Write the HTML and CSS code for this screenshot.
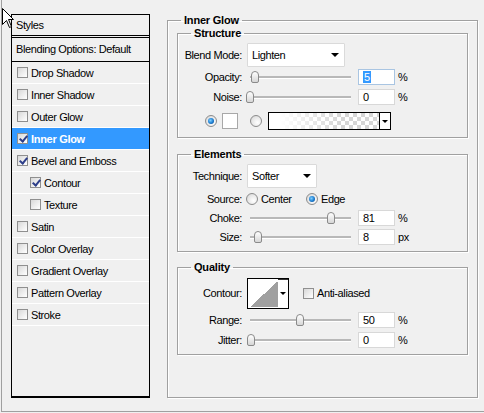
FILE: index.html
```html
<!DOCTYPE html>
<html>
<head>
<meta charset="utf-8">
<title>Layer Style - Inner Glow</title>
<link rel="stylesheet" href="styles.css">
</head>
<body>
<div class="screen">
  <div class="frame">
    <div class="styles-panel">
      <div class="sp-head">Styles</div>
      <div class="sp-blend">Blending Options: Default</div>
      <ul class="sp-list">
        <li class="sp-item"><span class="cb"></span>Drop Shadow</li>
        <li class="sp-item"><span class="cb"></span>Inner Shadow</li>
        <li class="sp-item"><span class="cb"></span>Outer Glow</li>
        <li class="sp-item active"><span class="cb checked"></span>Inner Glow</li>
        <li class="sp-item"><span class="cb checked"></span>Bevel and Emboss</li>
        <li class="sp-item sub"><span class="cb checked"></span>Contour</li>
        <li class="sp-item sub"><span class="cb"></span>Texture</li>
        <li class="sp-item"><span class="cb"></span>Satin</li>
        <li class="sp-item"><span class="cb"></span>Color Overlay</li>
        <li class="sp-item"><span class="cb"></span>Gradient Overlay</li>
        <li class="sp-item"><span class="cb"></span>Pattern Overlay</li>
        <li class="sp-item"><span class="cb"></span>Stroke</li>
      </ul>
    </div>

    <fieldset class="group outer">
      <legend class="outer-legend">Inner Glow</legend>

      <fieldset class="group sub-group structure">
        <legend>Structure</legend>
        <div class="row row-blend">
          <span class="lbl">Blend Mode:</span>
          <div class="select select-blend"><span>Lighten</span><span class="arrow"></span></div>
        </div>
        <div class="row row-opacity">
          <span class="lbl">Opacity:</span>
          <div class="slider"><span class="thumb" style="left:1px"></span></div>
          <div class="num focused"><span class="sel">5</span></div>
          <span class="unit">%</span>
        </div>
        <div class="row row-noise">
          <span class="lbl">Noise:</span>
          <div class="slider"><span class="thumb" style="left:-4px"></span></div>
          <div class="num">0</div>
          <span class="unit">%</span>
        </div>
        <div class="row row-color">
          <span class="radio on first"></span>
          <span class="swatch"></span>
          <span class="radio second"></span>
          <div class="gradient"><span class="grad-fill"></span><span class="grad-drop"><span class="arrow small"></span></span></div>
        </div>
      </fieldset>

      <fieldset class="group sub-group elements">
        <legend>Elements</legend>
        <div class="row row-tech">
          <span class="lbl">Technique:</span>
          <div class="select select-tech"><span>Softer</span><span class="arrow"></span></div>
        </div>
        <div class="row row-source">
          <span class="lbl">Source:</span>
          <span class="opt opt-center"><span class="radio"></span><span class="opt-text">Center</span></span>
          <span class="opt"><span class="radio on"></span><span class="opt-text">Edge</span></span>
        </div>
        <div class="row row-choke">
          <span class="lbl">Choke:</span>
          <div class="slider"><span class="thumb" style="left:77px"></span></div>
          <div class="num">81</div>
          <span class="unit">%</span>
        </div>
        <div class="row row-size">
          <span class="lbl">Size:</span>
          <div class="slider"><span class="thumb" style="left:4px"></span></div>
          <div class="num">8</div>
          <span class="unit">px</span>
        </div>
      </fieldset>

      <fieldset class="group sub-group quality">
        <legend>Quality</legend>
        <div class="row row-contour">
          <span class="lbl">Contour:</span>
          <div class="contour"><span class="contour-preview"></span><span class="contour-drop"><span class="arrow small"></span></span></div>
          <span class="cb aa"></span><span class="aa-text">Anti-aliased</span>
        </div>
        <div class="row row-range">
          <span class="lbl">Range:</span>
          <div class="slider"><span class="thumb" style="left:46px"></span></div>
          <div class="num">50</div>
          <span class="unit">%</span>
        </div>
        <div class="row row-jitter">
          <span class="lbl">Jitter:</span>
          <div class="slider"><span class="thumb" style="left:-3px"></span></div>
          <div class="num">0</div>
          <span class="unit">%</span>
        </div>
      </fieldset>
    </fieldset>
  </div>

  <svg class="cursor" width="16" height="30" viewBox="0 0 16 30">
    <path d="M2.5 8.5 L2.5 24.5 L6.5 20.5 L9.5 27.5 L11.5 26.5 L8.5 19.5 L13.5 19.5 Z" fill="#ffffff" stroke="#000000" stroke-width="1" stroke-linejoin="miter"/>
  </svg>
</div>
</body>
</html>
```

FILE: styles.css
```css
* { box-sizing: border-box; }

html, body {
  margin: 0;
  padding: 0;
  background: #f0f0f0;
}

.screen {
  position: relative;
  width: 484px;
  height: 413px;
  overflow: hidden;
  background: #f0f0f0;
  font-family: "Liberation Sans", Arial, sans-serif;
  font-size: 11px;
  letter-spacing: -0.4px;
  color: #000;
}

.frame {
  display: flex;
  align-items: flex-start;
  margin-left: 1px;
  width: 483px;
  height: 412px;
  padding: 14px 0 0 9px;
  border-left: 1px solid #a0a0a0;
  border-bottom: 1px solid #a0a0a0;
}

/* ---------- Styles list ---------- */
.styles-panel {
  flex: none;
  width: 139px;
  height: 384px;
  border: 1px solid #000;
  border-bottom-width: 2px;
  background: #f0f0f0;
}

.sp-head {
  height: 21px;
  line-height: 20px;
  padding-left: 4px;
  border-bottom: 1px solid #000;
}

.sp-blend {
  margin-top: 1px;
  height: 25px;
  line-height: 23px;
  padding-left: 4px;
  border-top: 1px solid #000;
  border-bottom: 1px solid #000;
}

.sp-list {
  list-style: none;
  margin: 0;
  padding: 0;
}

.sp-item {
  display: flex;
  align-items: center;
  height: 22px;
  padding-left: 5px;
  border-bottom: 1px solid #ffffff;
  white-space: nowrap;
}

.sp-item.sub { padding-left: 18px; }

.sp-item.active {
  background: #3399ff;
  color: #fff;
  font-weight: bold;
  letter-spacing: -0.3px;
}

.cb {
  position: relative;
  flex: none;
  width: 11px;
  height: 11px;
  margin-right: 3px;
  border: 1px solid #8f8f8f;
  background: linear-gradient(135deg, #d8d8d8 0%, #f4f4f4 70%, #ffffff 100%);
}

.cb.checked::after {
  content: "";
  position: absolute;
  left: 3px;
  top: 0px;
  width: 3px;
  height: 6px;
  border: solid #2e3f8a;
  border-width: 0 2px 2px 0;
  transform: rotate(40deg);
}

/* ---------- Group boxes ---------- */
.group {
  margin: 0;
  min-width: 0;
  border: 1px solid #a0a0a0;
  box-shadow: inset 1px 1px 0 #ffffff, 1px 1px 0 #ffffff;
}

.group legend {
  padding: 0 3px;
  margin-left: 13px;
  font-weight: bold;
  line-height: 13px;
  letter-spacing: -0.2px;
}

.outer {
  flex: none;
  width: 311px;
  margin-left: 17px;
  padding: 0 9px 42px 9px;
}

.outer .outer-legend { margin-left: 4px; }

.sub-group {
  width: 291px;
  padding: 0;
}

.structure { padding-bottom: 6px; }
.elements { margin-top: 10px; padding-bottom: 4px; }
.quality { margin-top: 9px; padding-bottom: 4px; }

/* ---------- Rows ---------- */
.row {
  display: flex;
  align-items: center;
  white-space: nowrap;
}

.lbl {
  flex: none;
  width: 64px;
  margin-right: 5px;
  text-align: right;
}

.row-blend { margin-top: 3px; height: 24px; }
.row-opacity { height: 19px; }
.row-noise { height: 21px; }
.row-color { margin-top: 4px; height: 20px; }

.row-tech { margin-top: 3px; height: 24px; }
.row-source { margin-top: 1px; height: 19px; }
.row-choke { height: 19px; }
.row-size { height: 20px; }

.row-contour { margin-top: 3px; height: 32px; }
.row-range { margin-top: 1px; height: 20px; }
.row-jitter { height: 20px; }

/* ---------- Select ---------- */
.select {
  display: flex;
  align-items: center;
  justify-content: space-between;
  height: 24px;
  padding: 0 5px 0 4px;
  background: #ffffff;
  border: 1px solid #dadada;
  border-radius: 1px;
}

.select-blend { width: 98px; }
.select-tech { width: 70px; }

.arrow {
  width: 0;
  height: 0;
  border-left: 4px solid transparent;
  border-right: 4px solid transparent;
  border-top: 4px solid #000;
}

.arrow.small {
  border-left-width: 3px;
  border-right-width: 3px;
  border-top-width: 3px;
}

/* ---------- Slider ---------- */
.slider {
  position: relative;
  flex: none;
  width: 101px;
  height: 12px;
  margin-left: 3px;
}

.slider::before {
  content: "";
  position: absolute;
  left: 0;
  right: 0;
  top: 5px;
  height: 2px;
  background: #b8b8b8;
  border-bottom: 1px solid #ffffff;
}

.thumb {
  position: absolute;
  top: 0;
  width: 8px;
  height: 12px;
  border: 1px solid #8a8a8a;
  border-radius: 4px 4px 2px 2px;
  background: linear-gradient(#ffffff, #d6d6d6);
}

/* ---------- Numeric field ---------- */
.num {
  flex: none;
  width: 37px;
  height: 16px;
  margin-left: 7px;
  padding-left: 4px;
  line-height: 14px;
  background: #ffffff;
  border: 1px solid #d8d8d8;
}

.num.focused { border-color: #a9c5e2; }

.sel {
  background: #3399ff;
  color: #fff;
  padding: 0 1px;
}

.unit { margin-left: 3px; }

/* ---------- Radios ---------- */
.radio {
  position: relative;
  flex: none;
  width: 12px;
  height: 12px;
  border-radius: 50%;
  border: 1px solid #8c8c8c;
  background: radial-gradient(circle at 65% 65%, #ffffff 0%, #e6e6e6 60%, #cfcfcf 100%);
}

.radio.on::after {
  content: "";
  position: absolute;
  left: 2px;
  top: 2px;
  width: 6px;
  height: 6px;
  border-radius: 50%;
  background: radial-gradient(circle at 40% 40%, #7fd0ff 0%, #1a7bd0 55%, #0a3f78 100%);
}

.radio.first { margin-left: 27px; }

.swatch {
  flex: none;
  width: 16px;
  height: 16px;
  margin-left: 5px;
  background: #ffffff;
  border: 1px solid #a8a8a8;
}

.radio.second { margin-left: 12px; }

.gradient {
  display: flex;
  flex: none;
  width: 123px;
  height: 18px;
  margin-left: 6px;
  border: 1px solid #000;
  background: #fff;
}

.grad-fill {
  flex: 1;
  background:
    linear-gradient(to right, #ffffff 10%, rgba(255,255,255,0) 65%),
    repeating-conic-gradient(#d6d6d6 0 25%, #ffffff 0 50%) 0 0 / 8px 8px;
}

.grad-drop {
  display: flex;
  align-items: center;
  justify-content: center;
  width: 11px;
  border-left: 1px solid #000;
  background: #fff;
}

/* ---------- Source options ---------- */
.opt {
  display: flex;
  align-items: center;
}

.opt-center {
  width: 60px;
  margin-left: -1px;
}

.opt-text { margin-left: 3px; }

/* ---------- Contour ---------- */
.contour {
  display: flex;
  flex: none;
  width: 42px;
  height: 31px;
  border: 1px solid #000;
  box-shadow: inset 1px 1px 0 #333;
  background: #fff;
}

.contour-preview {
  width: 30px;
  height: 100%;
  border: 2px solid #fff;
  border-right: 0;
  border-bottom-width: 1px;
  background: linear-gradient(to bottom right, #ffffff 50%, #a0a0a0 50%);
  background-clip: content-box;
  padding: 1px 0 0 1px;
}

.contour-drop {
  display: flex;
  align-items: center;
  justify-content: center;
  flex: 1;
}

.cb.aa { margin-left: 14px; }
.aa-text { margin-left: 0; }

/* ---------- Cursor ---------- */
.cursor {
  position: absolute;
  left: 0;
  top: 0;
}
```
